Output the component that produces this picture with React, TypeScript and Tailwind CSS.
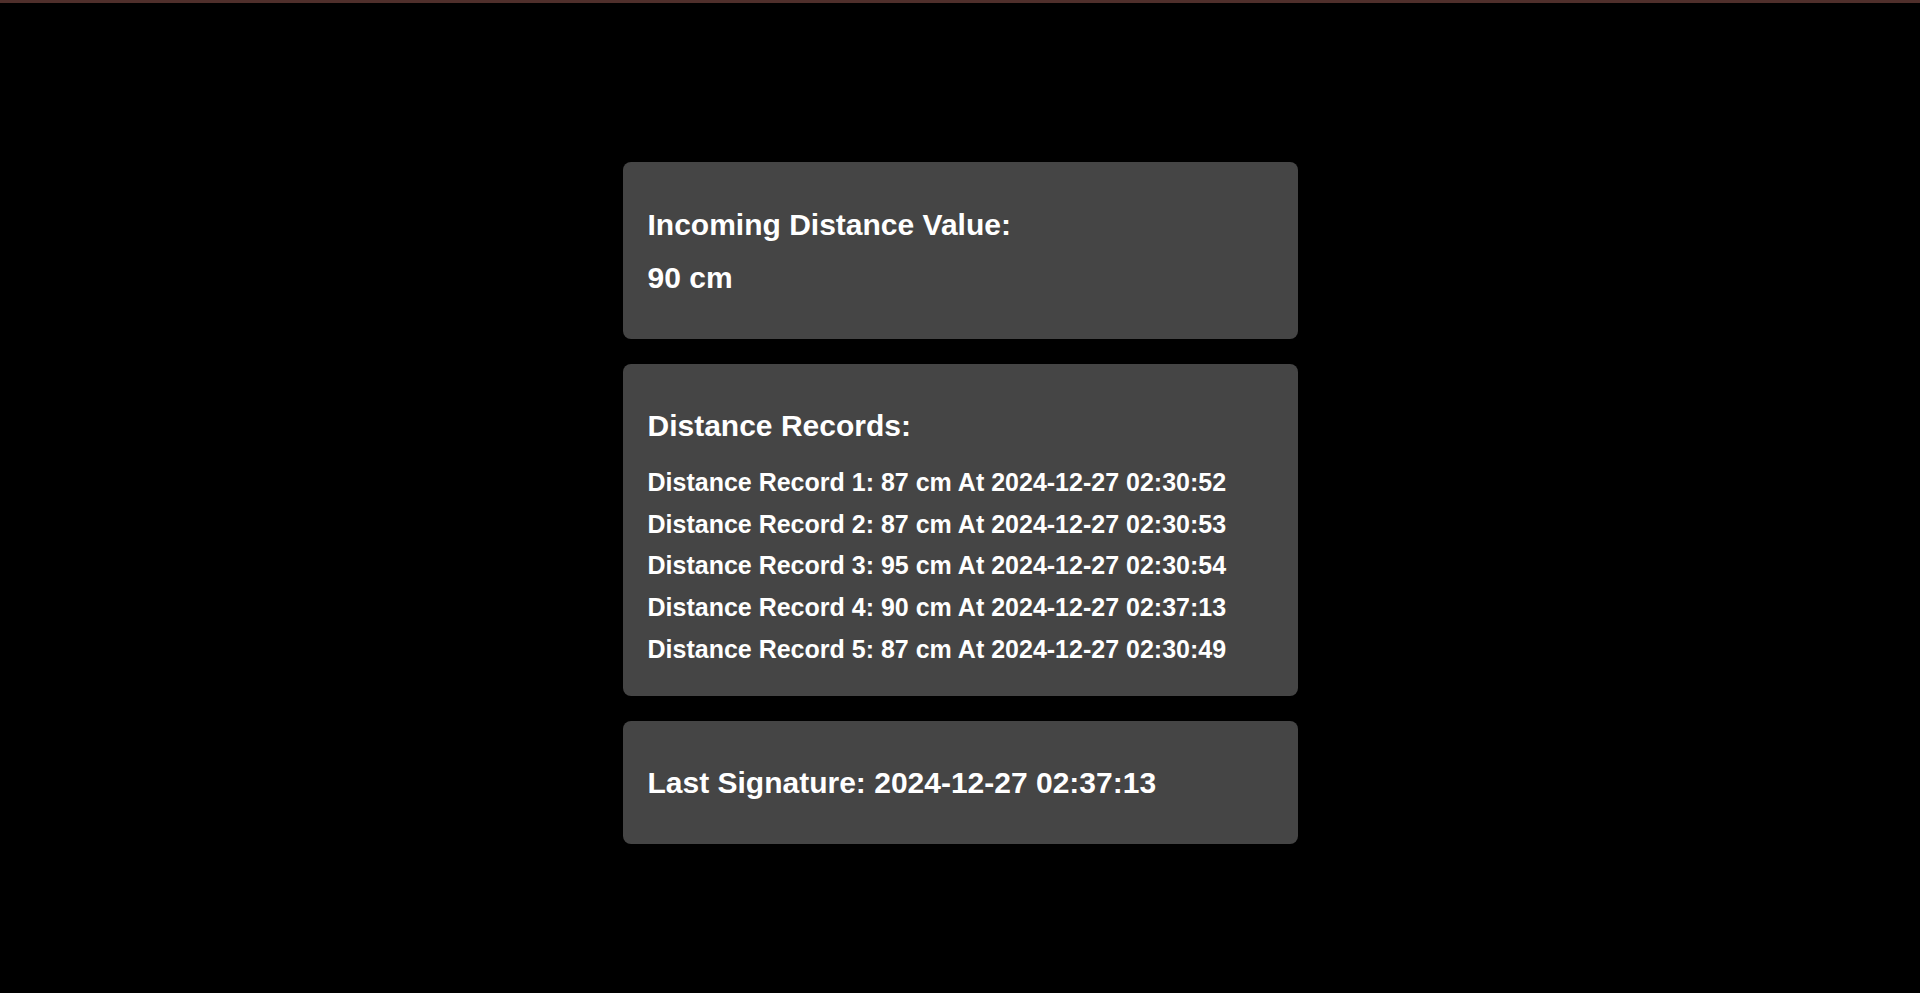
import React from 'react'

const records = [
  { value: 87, time: '2024-12-27 02:30:52' },
  { value: 87, time: '2024-12-27 02:30:53' },
  { value: 95, time: '2024-12-27 02:30:54' },
  { value: 90, time: '2024-12-27 02:37:13' },
  { value: 87, time: '2024-12-27 02:30:49' },
]

function App() {
  return (
    <div className="min-h-screen bg-black text-white font-['Liberation_Sans',Arial,sans-serif] font-bold">
      <div className="h-[3px] bg-[#4f2f2b]" />

      <div className="flex flex-col items-center pt-[159px] gap-[25px]">
        {/* Incoming value */}
        <div className="w-[675px] bg-[#454545] rounded-lg px-[25px] pt-[46px] pb-[44px] flex flex-col gap-[19px]">
          <h2 className="text-[30px] leading-[34px]">Incoming Distance Value:</h2>
          <p className="text-[30px] leading-[34px]">90 cm</p>
        </div>

        {/* Records */}
        <div className="w-[675px] bg-[#454545] rounded-lg px-[25px] pt-[45px] pb-[32px]">
          <h2 className="text-[30px] leading-[34px]">Distance Records:</h2>
          <ul className="mt-[25px] flex flex-col gap-[13px]">
            {records.map((r, i) => (
              <li key={i} className="text-[25px] leading-[28.7px]">
                Distance Record {i + 1}: {r.value} cm At {r.time}
              </li>
            ))}
          </ul>
        </div>

        {/* Last signature */}
        <div className="w-[675px] bg-[#454545] rounded-lg px-[25px] pt-[45px] pb-[44px]">
          <h2 className="text-[30px] leading-[34px]">Last Signature: 2024-12-27 02:37:13</h2>
        </div>
      </div>
    </div>
  )
}

export default App
